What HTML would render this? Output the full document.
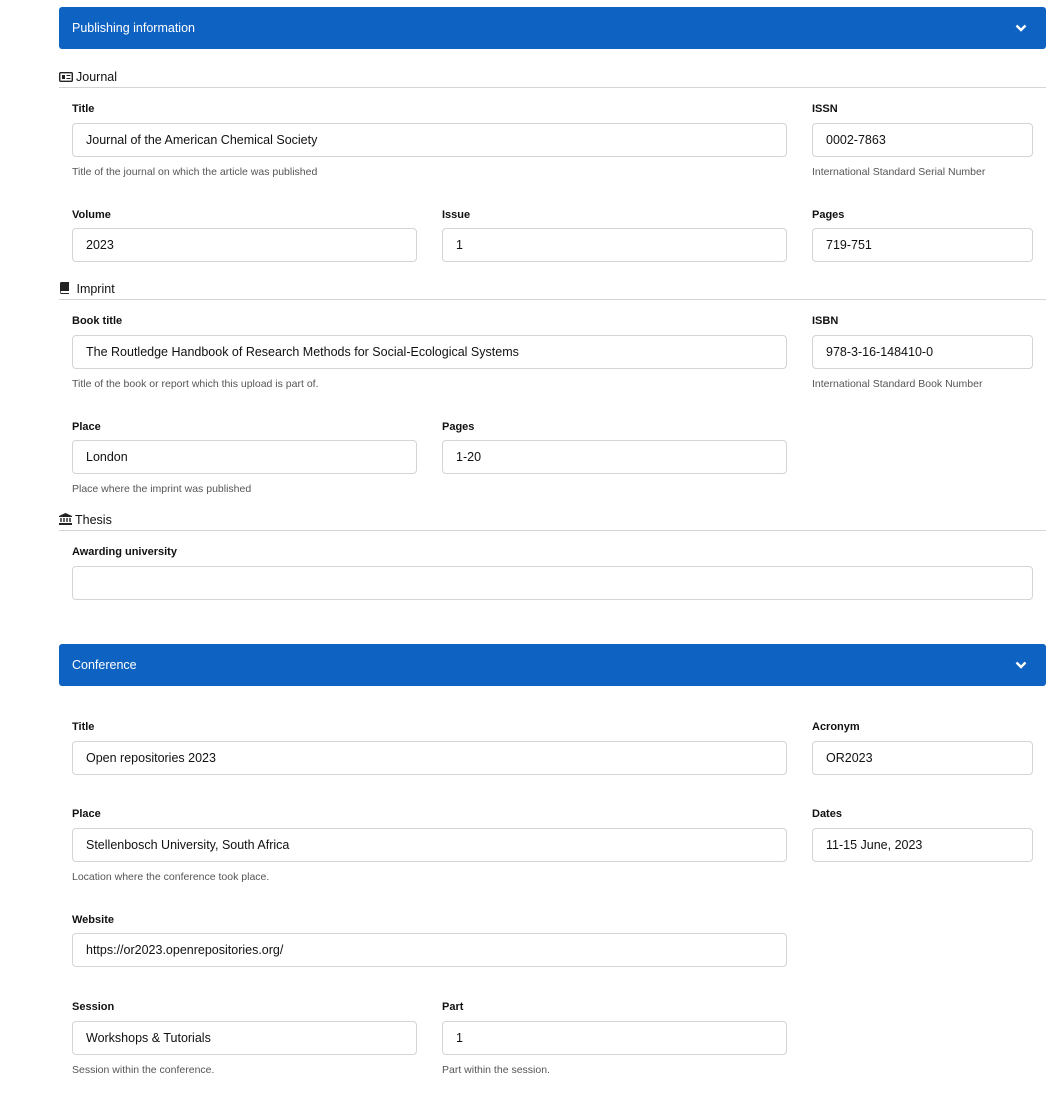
<!DOCTYPE html>
<html><head><meta charset="utf-8"><style>
body{margin:0;width:1057px;height:1098px;background:#fff;font-family:"Liberation Sans",sans-serif;color:#111;position:relative;overflow:hidden}
.hdr{position:absolute;left:59px;width:987px;height:42px;background:#0e62c1;border-radius:3px;color:#fff;font-size:12.5px;line-height:42px;padding-left:13px;box-sizing:border-box}
.hdr svg{position:absolute;right:19px;top:17px}
.sec{position:absolute;left:59px;width:987px;border-bottom:1px solid #d4d4d5;font-size:12.5px;height:17px;line-height:15px}
.sec svg{vertical-align:-1px;margin-right:3px}
.lb{position:absolute;font-weight:bold;font-size:11px}
.in{position:absolute;height:34px;border:1px solid #d4d4d5;border-radius:4px;box-sizing:border-box;font-size:12.5px;line-height:32px;padding-left:13px}
.hp{position:absolute;font-size:10.5px;color:#555}
</style></head><body>
<div class="hdr" style="top:7px">Publishing information<svg width="12" height="8" viewBox="0 0 12 8"><path d="M1.5 1.5L6 6l4.5-4.5" stroke="#fff" stroke-width="2.4" fill="none"/></svg></div>
<div class="sec" style="top:70px"><svg width="14" height="10" viewBox="0 0 14 10"><rect x="0.7" y="0.7" width="12.6" height="8.6" rx="1" fill="none" stroke="#222" stroke-width="1.4"/><rect x="3" y="3" width="3" height="4" fill="#222"/><path d="M7.5 3.5h4M7.5 6.5h4" stroke="#222"/></svg>Journal</div>
<div class="lb" style="left:72px;top:103px">Title</div><div class="lb" style="left:812px;top:103px">ISSN</div>
<div class="in" style="left:72px;top:123px;width:715px">Journal of the American Chemical Society</div>
<div class="in" style="left:812px;top:123px;width:221px">0002-7863</div>
<div class="hp" style="left:72px;top:166px">Title of the journal on which the article was published</div>
<div class="hp" style="left:812px;top:166px">International Standard Serial Number</div>
<div class="lb" style="left:72px;top:209px">Volume</div><div class="lb" style="left:442px;top:209px">Issue</div><div class="lb" style="left:812px;top:209px">Pages</div>
<div class="in" style="left:72px;top:228px;width:345px">2023</div>
<div class="in" style="left:442px;top:228px;width:345px">1</div>
<div class="in" style="left:812px;top:228px;width:221px">719-751</div>
<div class="sec" style="top:282px"><svg width="11" height="12" viewBox="0 0 11 12"><path d="M1 1.5A1.5 1.5 0 0 1 2.5 0H10v9H2.5a1 1 0 0 0 0 2H10v1H2.5A1.5 1.5 0 0 1 1 10.5z" fill="#222"/></svg> Imprint</div>
<div class="lb" style="left:72px;top:315px">Book title</div><div class="lb" style="left:812px;top:315px">ISBN</div>
<div class="in" style="left:72px;top:335px;width:715px">The Routledge Handbook of Research Methods for Social-Ecological Systems</div>
<div class="in" style="left:812px;top:335px;width:221px">978-3-16-148410-0</div>
<div class="hp" style="left:72px;top:378px">Title of the book or report which this upload is part of.</div>
<div class="hp" style="left:812px;top:378px">International Standard Book Number</div>
<div class="lb" style="left:72px;top:421px">Place</div><div class="lb" style="left:442px;top:421px">Pages</div>
<div class="in" style="left:72px;top:440px;width:345px">London</div>
<div class="in" style="left:442px;top:440px;width:345px">1-20</div>
<div class="hp" style="left:72px;top:483px">Place where the imprint was published</div>
<div class="sec" style="top:513px"><svg width="13" height="12" viewBox="0 0 13 12"><path d="M6.5 0L13 3v1H0V3z" fill="#222"/><path d="M2 5v4M5 5v4M8 5v4M11 5v4" stroke="#222" stroke-width="1.4"/><rect x="0" y="10" width="13" height="2" fill="#222"/></svg>Thesis</div>
<div class="lb" style="left:72px;top:546px">Awarding university</div>
<div class="in" style="left:72px;top:566px;width:961px"></div>
<div class="hdr" style="top:644px">Conference<svg width="12" height="8" viewBox="0 0 12 8"><path d="M1.5 1.5L6 6l4.5-4.5" stroke="#fff" stroke-width="2.4" fill="none"/></svg></div>
<div class="lb" style="left:72px;top:721px">Title</div><div class="lb" style="left:812px;top:721px">Acronym</div>
<div class="in" style="left:72px;top:741px;width:715px">Open repositories 2023</div>
<div class="in" style="left:812px;top:741px;width:221px">OR2023</div>
<div class="lb" style="left:72px;top:808px">Place</div><div class="lb" style="left:812px;top:808px">Dates</div>
<div class="in" style="left:72px;top:828px;width:715px">Stellenbosch University, South Africa</div>
<div class="in" style="left:812px;top:828px;width:221px">11-15 June, 2023</div>
<div class="hp" style="left:72px;top:871px">Location where the conference took place.</div>
<div class="lb" style="left:72px;top:914px">Website</div>
<div class="in" style="left:72px;top:933px;width:715px">https://or2023.openrepositories.org/</div>
<div class="lb" style="left:72px;top:1001px">Session</div><div class="lb" style="left:442px;top:1001px">Part</div>
<div class="in" style="left:72px;top:1021px;width:345px">Workshops &amp; Tutorials</div>
<div class="in" style="left:442px;top:1021px;width:345px">1</div>
<div class="hp" style="left:72px;top:1064px">Session within the conference.</div>
<div class="hp" style="left:442px;top:1064px">Part within the session.</div>
</body></html>
